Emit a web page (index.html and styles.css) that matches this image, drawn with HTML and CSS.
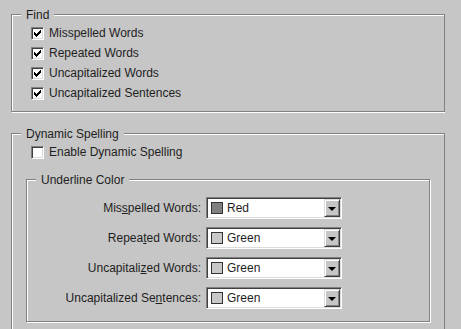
FILE: index.html
```html
<!DOCTYPE html>
<html lang="en">
<head>
    <meta charset="UTF-8">
    <title>Spelling Preferences</title>
    <link rel="stylesheet" href="styles.css">
</head>
<body>
    <div class="group">
        <div class="group-title">Find</div>
        <div class="check-list">
            <label class="check-row"><span class="check on"></span>Misspelled Words</label>
            <label class="check-row"><span class="check on"></span>Repeated Words</label>
            <label class="check-row"><span class="check on"></span>Uncapitalized Words</label>
            <label class="check-row"><span class="check on"></span>Uncapitalized Sentences</label>
        </div>
    </div>

    <div class="group dynamic">
        <div class="group-title">Dynamic Spelling</div>
        <div class="check-list">
            <label class="check-row"><span class="check"></span>Enable Dynamic Spelling</label>
        </div>

        <div class="group underline">
            <div class="group-title">Underline Color</div>
            <div class="color-grid">
                <span class="color-label">Mis<u>s</u>pelled Words:</span>
                <div class="dropdown">
                    <span class="swatch red"></span>
                    <span class="dropdown-text">Red</span>
                    <span class="dropdown-btn"><span class="arrow"></span></span>
                </div>

                <span class="color-label">Repea<u>t</u>ed Words:</span>
                <div class="dropdown">
                    <span class="swatch green"></span>
                    <span class="dropdown-text">Green</span>
                    <span class="dropdown-btn"><span class="arrow"></span></span>
                </div>

                <span class="color-label">Uncapitali<u>z</u>ed Words:</span>
                <div class="dropdown">
                    <span class="swatch green"></span>
                    <span class="dropdown-text">Green</span>
                    <span class="dropdown-btn"><span class="arrow"></span></span>
                </div>

                <span class="color-label">Uncapitalized Se<u>n</u>tences:</span>
                <div class="dropdown">
                    <span class="swatch green"></span>
                    <span class="dropdown-text">Green</span>
                    <span class="dropdown-btn"><span class="arrow"></span></span>
                </div>
            </div>
        </div>
    </div>
</body>
</html>
```

FILE: styles.css
```css
* {
    margin: 0;
    padding: 0;
    box-sizing: border-box;
}

html, body {
    overflow: hidden;
}

body {
    font-family: "Liberation Sans", Arial, sans-serif;
    font-size: 12px;
    color: #1e1e1e;
    background-color: #c6c6c6;
    padding: 14px 0 0 11px;
    width: 445px;
}

/* etched group box */
.group {
    width: 434px;
    border: 1px solid #808080;
    box-shadow: inset 1px 1px 0 #fff, 1px 1px 0 #fff;
    padding-bottom: 8px;
}

.group-title {
    width: fit-content;
    margin: -7px 0 0 9px;
    padding: 0 5px;
    line-height: 14px;
    background-color: #c6c6c6;
}

.dynamic {
    margin-top: 21px;
    padding-bottom: 40px;
}

.underline {
    width: auto;
    margin: 17px 14px 0 14px;
    padding-bottom: 12px;
}

.check-list {
    padding-top: 1px;
}

.check-row {
    display: flex;
    align-items: center;
    gap: 5px;
    height: 20px;
    padding-left: 19px;
}

.check {
    width: 13px;
    height: 13px;
    background-color: #fff;
    border: 1px solid;
    border-color: #808080 #fff #fff #808080;
    box-shadow: inset 1px 1px 0 #404040, inset -1px -1px 0 #dcdcdc;
}

.check.on {
    background: #fff url("data:image/svg+xml,%3Csvg xmlns='http://www.w3.org/2000/svg' width='11' height='11'%3E%3Cpath d='M2 4h1v1h1v1h1V5h1V4h1V3h1V2h1v3H8v1H7v1H6v1H5v1H4V8H3V7H2z' fill='%23000'/%3E%3C/svg%3E") no-repeat 0 0;
}

.color-grid {
    display: grid;
    grid-template-columns: 174px 136px;
    column-gap: 5px;
    row-gap: 8px;
    align-items: center;
    padding-top: 10px;
}

.color-label {
    text-align: right;
}

.dropdown {
    display: flex;
    align-items: center;
    height: 22px;
    background-color: #fff;
    border: 1px solid;
    border-color: #808080 #fff #fff #808080;
    box-shadow: inset 1px 1px 0 #404040, inset -1px -1px 0 #dcdcdc;
    padding: 1px 1px 1px 4px;
}

.swatch {
    width: 12px;
    height: 12px;
    border: 1px solid #333;
    margin-right: 4px;
}

.swatch.red {
    background-color: #808080;
}

.swatch.green {
    background-color: #c8c8c8;
}

.dropdown-text {
    flex: 1;
}

.dropdown-btn {
    display: flex;
    align-items: center;
    justify-content: center;
    width: 16px;
    height: 18px;
    background-color: #c6c6c6;
    border: 1px solid;
    border-color: #dcdcdc #404040 #404040 #dcdcdc;
    box-shadow: inset 1px 1px 0 #fff, inset -1px -1px 0 #808080;
}

.arrow {
    width: 0;
    height: 0;
    border-left: 4px solid transparent;
    border-right: 4px solid transparent;
    border-top: 4px solid #000;
    margin-top: 1px;
}
```
